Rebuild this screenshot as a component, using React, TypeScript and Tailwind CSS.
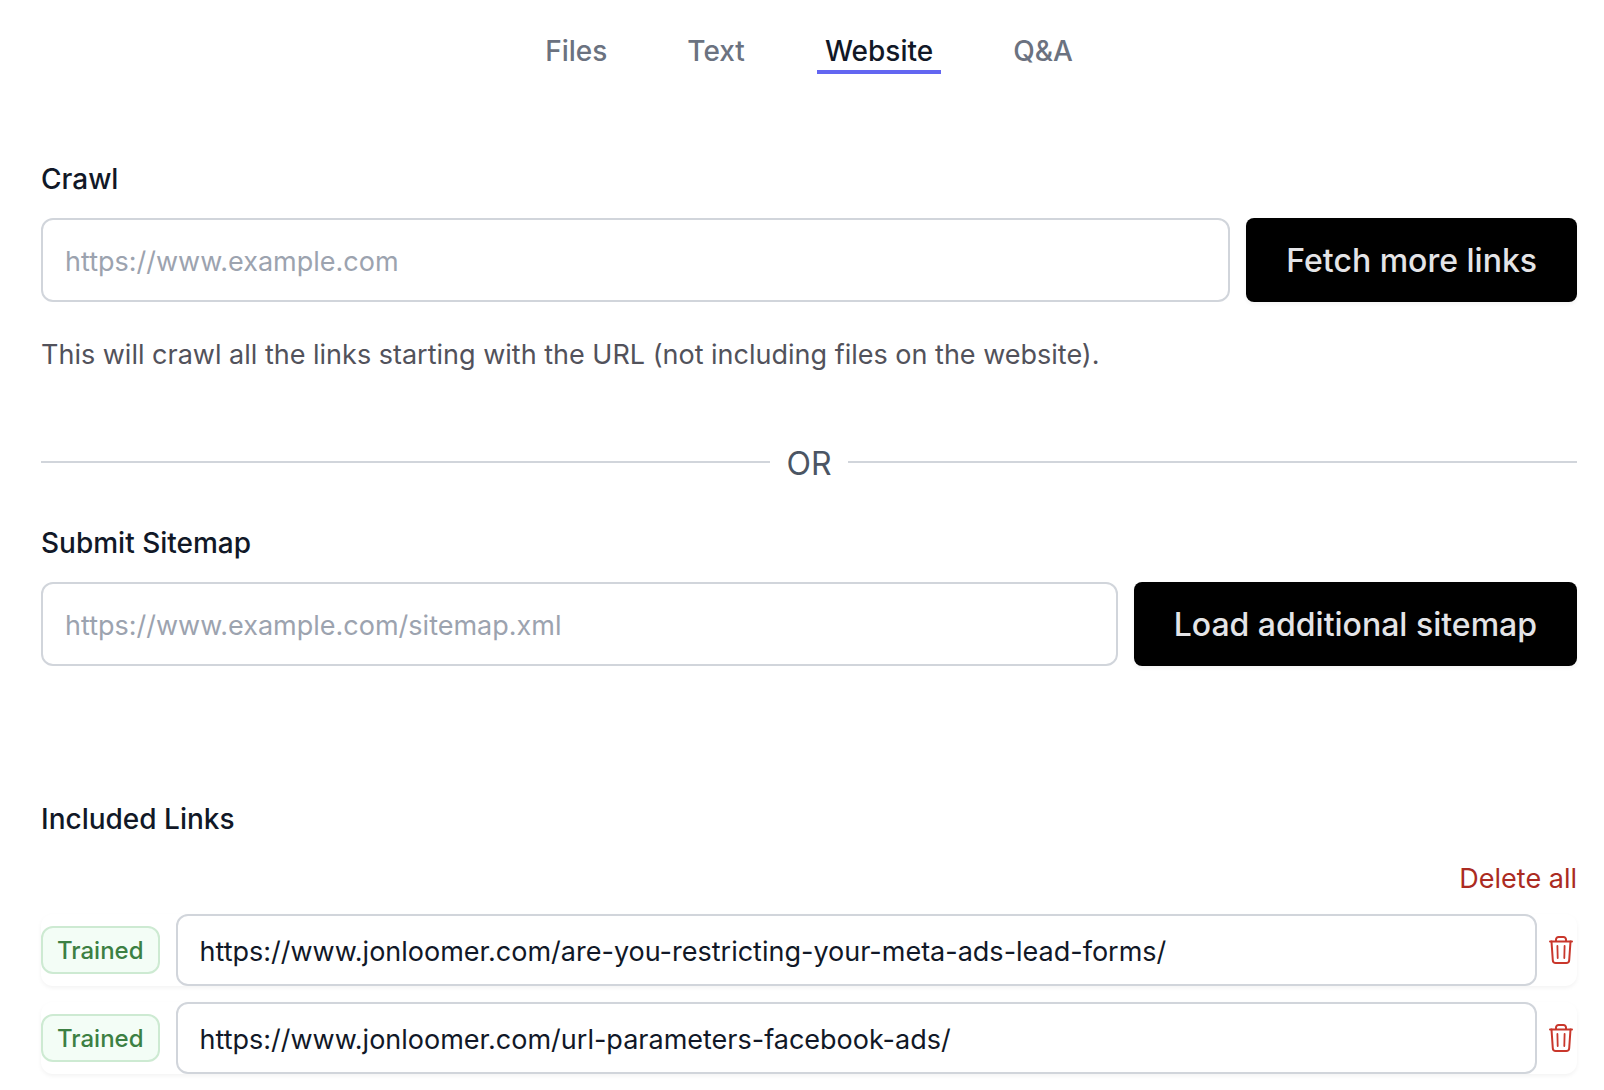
import { useState } from "react";

const tabs = ["Files", "Text", "Website", "Q&A"];

const initialLinks = [
  "https://www.jonloomer.com/are-you-restricting-your-meta-ads-lead-forms/",
  "https://www.jonloomer.com/url-parameters-facebook-ads/",
];

function TrashIcon() {
  return (
    <svg viewBox="0 0 24 28" className="h-7 w-6" fill="none" stroke="currentColor" strokeLinecap="round" strokeLinejoin="round" aria-hidden="true">
      <path strokeWidth="2" d="M1 5.500h22" />
      <path strokeWidth="2" d="M7 5V3.500A2.500 2.500 0 0 1 9.500 1h5A2.500 2.500 0 0 1 17 3.500V5" />
      <path strokeWidth="2" d="M2.500 5.500l1.300 18.700A3 3 0 0 0 6.800 27h10.400a3 3 0 0 0 3-2.800L21.500 5.500" />
      <path strokeWidth="1.800" d="M8.400 10l.3 12M15.600 10l-.3 12" />
    </svg>
  );
}

type SourceFieldProps = { id: string; label: string; placeholder: string; action: string };

function SourceField({ id, label, placeholder, action }: SourceFieldProps) {
  return (
    <div>
      <label htmlFor={id} className="block text-[28px] leading-[42px] font-medium text-[#111827]">
        {label}
      </label>
      <div className="mt-[18px] flex gap-4">
        <input
          id={id}
          type="url"
          placeholder={placeholder}
          className="h-21 min-w-0 flex-1 rounded-xl border-2 border-[#d1d5db] bg-white px-[22px] pt-0.5 text-[27px] text-[#111827] outline-none placeholder:text-[#9ca3af]"
        />
        <button
          type="button"
          className="h-21 shrink-0 rounded-lg bg-black px-10 pt-0.5 text-[32px] font-medium text-zinc-200 shadow-[0_2px_4px_rgba(0,0,0,0.05)]"
        >
          {action}
        </button>
      </div>
    </div>
  );
}

export default function App() {
  const [active, setActive] = useState("Website");
  const [links, setLinks] = useState(initialLinks);

  return (
    <main className="min-h-screen bg-white pt-8 pr-[27px] pb-4 pl-[41px] font-['Inter',sans-serif]">
      <nav className="flex justify-center gap-16">
        {tabs.map((tab) => (
          <button
            key={tab}
            type="button"
            onClick={() => setActive(tab)}
            className={
              tab === active
                ? "border-b-4 border-[#6366f1] px-2 text-[28px] leading-[38px] font-medium text-[#111827]"
                : "border-b-4 border-transparent px-2 text-[28px] leading-[38px] font-medium text-[#6b7280]"
            }
          >
            {tab}
          </button>
        ))}
      </nav>

      <section className="mt-21">
        <SourceField id="crawl" label="Crawl" placeholder="https://www.example.com" action="Fetch more links" />
        <p className="mt-8 text-[27px] leading-[42px] text-[#52525b]">
          This will crawl all the links starting with the URL (not including files on the website).
        </p>
      </section>

      <div className="mt-[62px] flex items-center gap-4">
        <hr className="flex-1 border-t-2 border-[#d1d5db]" />
        <span className="pt-1 text-[32px] leading-11 text-[#4b5563]">OR</span>
        <hr className="flex-1 border-t-2 border-[#d1d5db]" />
      </div>

      <section className="mt-9">
        <SourceField id="sitemap" label="Submit Sitemap" placeholder="https://www.example.com/sitemap.xml" action="Load additional sitemap" />
      </section>

      <section className="mt-33">
        <h2 className="text-[28px] leading-[42px] font-medium text-[#111827]">Included Links</h2>
        <div className="mt-[18px] flex justify-end">
          <button type="button" onClick={() => setLinks([])} className="text-[27px] leading-[42px] text-[#ab2b22]">
            Delete all
          </button>
        </div>
        <ul className="mt-[14px] flex flex-col gap-4">
          {links.map((link) => (
            <li key={link} className="flex items-center rounded-xl shadow-[0_2px_4px_rgba(0,0,0,0.05)]">
              <span className="flex h-12 items-center rounded-xl border-2 border-[#cdead2] bg-[#f3fdf6] px-3.5 pt-0.5 text-2xl font-medium text-[#3c8043]">
                Trained
              </span>
              <input
                type="url"
                aria-label="Included link"
                defaultValue={link}
                className="ml-4 h-18 min-w-0 flex-1 rounded-xl border-2 border-[#d1d5db] bg-white px-[22px] pt-0.5 text-[27px] text-[#111827] outline-none"
              />
              <button
                type="button"
                aria-label="Delete link"
                onClick={() => setLinks(links.filter((l) => l !== link))}
                className="mr-1 ml-3 text-[#c9372c]"
              >
                <TrashIcon />
              </button>
            </li>
          ))}
        </ul>
      </section>
    </main>
  );
}
